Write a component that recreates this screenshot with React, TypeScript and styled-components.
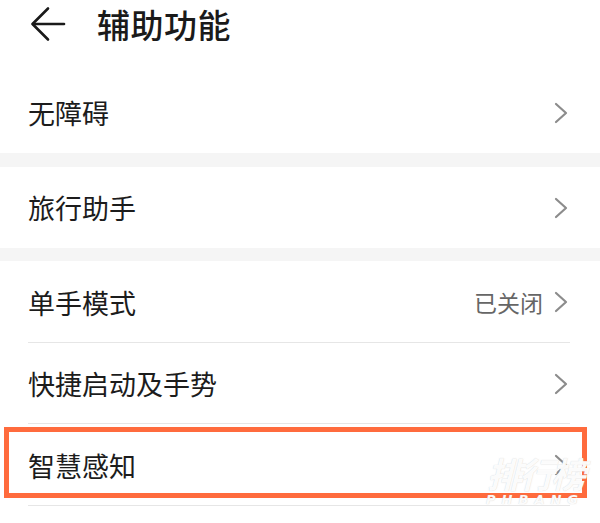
import React from "react";
import styled, { createGlobalStyle } from "styled-components";

const Global = createGlobalStyle`
  html, body { margin: 0; padding: 0; background: #ffffff; }
  body { font-family: "Noto Sans CJK SC", "Noto Sans", sans-serif; }
`;

const Page = styled.div`
  width: 600px;
  height: 523px;
  background: #ffffff;
  overflow: hidden;
  position: relative;
`;

const Header = styled.header`
  height: 72px;
  display: flex;
  align-items: center;
  padding-left: 30px;
  padding-bottom: 24px;
  box-sizing: border-box;
`;

const Title = styled.h1`
  margin: 0 0 0 31px;
  font-size: 33px;
  font-weight: 500;
  color: #1a1a1a;
  letter-spacing: 0.5px;
`;

const Section = styled.section`
  background: #ffffff;
`;

const Band = styled.div<{ $h: number }>`
  height: ${(p) => p.$h}px;
  background: #f5f5f5;
`;

const Row = styled.div<{ $h: number; $divider?: boolean }>`
  position: relative;
  height: ${(p) => p.$h}px;
  display: flex;
  align-items: center;
  justify-content: space-between;
  padding: 0 32px 0 28px;
  box-sizing: border-box;
  &::after {
    content: "";
    display: ${(p) => (p.$divider ? "block" : "none")};
    position: absolute;
    left: 28px;
    right: 30px;
    bottom: 0;
    height: 1px;
    background: #e6e6e6;
  }
`;

const Label = styled.span`
  font-size: 27px;
  color: #1c1c1c;
`;

const Right = styled.div`
  display: flex;
  align-items: center;
  gap: 11px;
`;

const Status = styled.span`
  font-size: 23px;
  color: #666666;
`;

const Highlight = styled.div`
  position: absolute;
  left: 4px;
  right: 13px;
  top: 3px;
  bottom: 8px;
  border: 5px solid #ff6b3d;
  pointer-events: none;
`;

const Watermark = styled.div`
  position: absolute;
  right: 16px;
  bottom: 17px;
  display: flex;
  flex-direction: column;
  align-items: center;
  gap: 2px;
  font-style: italic;
  font-weight: 700;
  color: rgba(255, 255, 255, 0.95);
  text-shadow: 0 0 1px rgba(170, 170, 170, 0.6);
  pointer-events: none;
`;

const WmMain = styled.span`
  font-size: 35px;
  line-height: 36px;
  letter-spacing: -3px;
`;

const WmSub = styled.span`
  font-family: "DejaVu Sans", sans-serif;
  font-size: 13px;
  line-height: 13px;
  letter-spacing: 6px;
`;

const BackArrow = () => (
  <svg width="36" height="36" viewBox="0 0 36 36" fill="none">
    <path d="M34 18H3" stroke="#1a1a1a" strokeWidth="2.6" strokeLinecap="round" />
    <path d="M18 2.5L2.5 18L18 33.5" stroke="#1a1a1a" strokeWidth="2.6" strokeLinecap="round" strokeLinejoin="round" />
  </svg>
);

const Chevron = () => (
  <svg width="14" height="22" viewBox="0 0 14 22" fill="none">
    <path d="M2 2L12 11L2 20" stroke="#8c8c8c" strokeWidth="2.2" strokeLinecap="round" strokeLinejoin="round" />
  </svg>
);

type Item = { label: string; status?: string; h: number; divider?: boolean; highlight?: boolean };

const ItemRow = ({ item }: { item: Item }) => (
  <Row $h={item.h} $divider={item.divider}>
    <Label>{item.label}</Label>
    <Right>
      {item.status && <Status>{item.status}</Status>}
      <Chevron />
    </Right>
    {item.highlight && <Highlight />}
  </Row>
);

export default function App() {
  return (
    <>
      <Global />
      <Page>
        <Header>
          <BackArrow />
          <Title>辅助功能</Title>
        </Header>
        <Section>
          <ItemRow item={{ label: "无障碍", h: 81 }} />
        </Section>
        <Band $h={14} />
        <Section>
          <ItemRow item={{ label: "旅行助手", h: 81 }} />
        </Section>
        <Band $h={13} />
        <Section>
          <ItemRow item={{ label: "单手模式", status: "已关闭", h: 82, divider: true }} />
          <ItemRow item={{ label: "快捷启动及手势", h: 81, divider: true }} />
          <ItemRow item={{ label: "智慧感知", h: 82, divider: true, highlight: true }} />
        </Section>
        <Watermark>
          <WmMain>排行榜</WmMain>
          <WmSub>PHBANG</WmSub>
        </Watermark>
      </Page>
    </>
  );
}
